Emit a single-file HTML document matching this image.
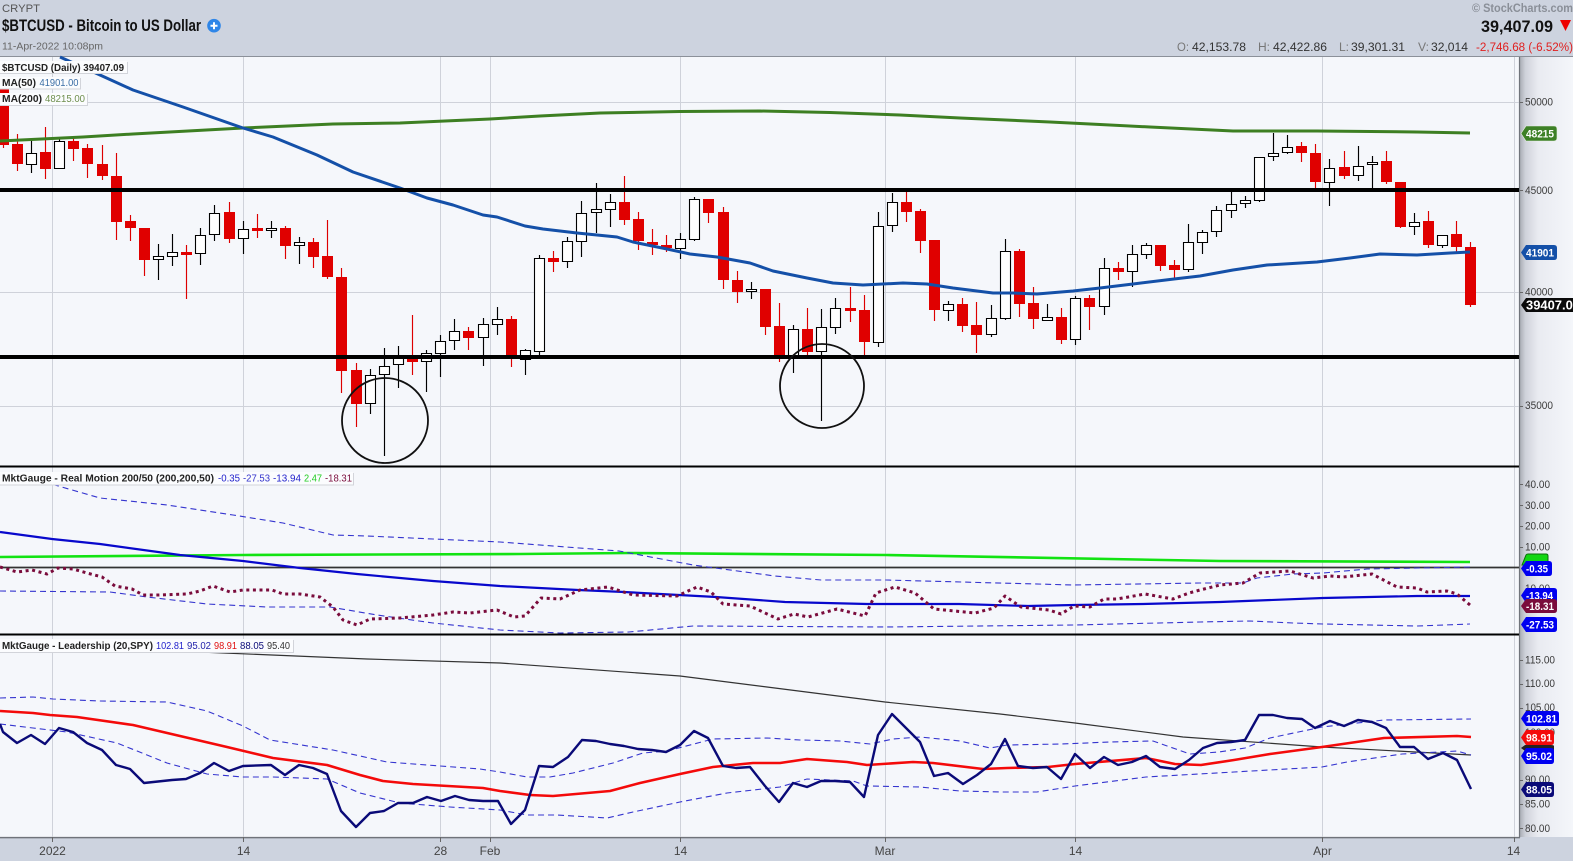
<!DOCTYPE html>
<html>
<head>
<meta charset="utf-8">
<style>
html,body{margin:0;padding:0;background:#cdd3df;overflow:hidden}
svg{display:block}
text{font-family:"Liberation Sans",sans-serif}
.ax{font-size:11px;fill:#3a3a3a}
.xl{font-size:12px;fill:#444;text-anchor:middle}
.lb{font-size:10px;fill:#222;font-weight:bold}
.tg{font-size:11px;fill:#fff;font-weight:bold}
.hd{font-size:11.5px;fill:#333}
.hg{font-size:11.5px;fill:#777}
</style>
</head>
<body>
<svg width="1573" height="861" viewBox="0 0 1573 861" xmlns="http://www.w3.org/2000/svg">
<defs>
<linearGradient id="gut" x1="0" x2="1" y1="0" y2="0">
<stop offset="0" stop-color="#a3a7af"/>
<stop offset="0.12" stop-color="#cfd2da"/>
<stop offset="0.35" stop-color="#e9ebf1"/>
<stop offset="1" stop-color="#f4f6fa"/>
</linearGradient>
</defs>
<rect width="1573" height="861" fill="#cdd3df"/>
<rect x="0" y="57" width="1519" height="780" fill="#f5f7fb"/>
<rect x="1519" y="57" width="54" height="780" fill="url(#gut)"/>
<path d="M0 56.5H1573" stroke="#8b9099" stroke-width="1"/>
<path d="M0 837.5H1519" stroke="#6f737a" stroke-width="1.2"/>
<path d="M0 838.5H1520" stroke="#aeb3bd" stroke-width="1"/>
<path d="M1519.5 57V838" stroke="#70747b" stroke-width="1.2"/>

<!-- grid -->
<g stroke="#cfd2da" stroke-width="1" fill="none">
<path d="M52.5 57V837M243.5 57V837M440.5 57V837M490.5 57V837M680.5 57V837M885.5 57V837M1075.5 57V837M1322.5 57V837M1514.5 57V837"/>
<path d="M0 102.5H1519M0 292.5H1519M0 406.5H1519"/>
</g>
<g stroke="#666" stroke-width="1">
<path d="M52.5 837V842M243.5 837V842M440.5 837V842M490.5 837V842M680.5 837V842M885.5 837V842M1075.5 837V842M1322.5 837V842M1514.5 837V842"/>
<path d="M1520 102.5h3M1520 190.5h3M1520 292.5h3M1520 406.5h3M1520 484.5h3M1520 505.5h3M1520 526.5h3M1520 547.5h3M1520 660.5h3M1520 684.5h3M1520 708.5h3M1520 780.5h3M1520 804.5h3M1520 828.5h3"/>
</g>

<!-- wicks -->
<path fill="none" stroke="#000" stroke-width="1.15" d="M31.5 138V173M59.5 137V168M158.5 244V280M172.5 234V266M200.5 228V265M214.5 205V241M243.5 221V254M271.5 221V238M299.5 237V264M370.5 369V414M384.5 348V456M398.5 346V388M426.5 350V392M440.5 335V377M454.5 319V350M483.5 318V366M497.5 307V335M525.5 349V375M539.5 255V357M567.5 237V268M581.5 201V257M596.5 183V233M610.5 194V227M680.5 233V259M694.5 197V241M751.5 282V299M793.5 325V373M821.5 309V421M835.5 298V334M878.5 212V347M892.5 193V232M948.5 301V321M991.5 305V337M1005.5 239V320M1047.5 304V320M1075.5 296V345M1104.5 258V315M1132.5 245V287M1146.5 243V259M1188.5 224V272M1202.5 230V254M1216.5 206V237M1231.5 191V218M1245.5 196V208M1259.5 157V202M1273.5 133V161M1287.5 135V154M1329.5 159V206M1358.5 146V181M1372.5 156V188M1414.5 213V235M1442.5 235V248"/>
<path fill="none" stroke="#dd0000" stroke-width="1.15" d="M3.5 85V148M17.5 134V171M45.5 127V179M73.5 138V161M87.5 144V178M102.5 145V180M116.5 153V240M130.5 215V241M144.5 228V276M186.5 245V299M229.5 202V243M257.5 214V238M285.5 226V259M313.5 238V268M327.5 220V279M341.5 268V393M356.5 363V427M412.5 315V375M468.5 327V350M511.5 316V367M553.5 251V272M624.5 176V225M638.5 212V250M652.5 229V255M666.5 235V252M708.5 199V223M723.5 207V289M737.5 271V303M765.5 289V335M779.5 303V362M807.5 308V357M850.5 287V322M864.5 295V357M906.5 192V222M920.5 209V253M934.5 240V321M962.5 298V332M976.5 302V353M1019.5 249V317M1033.5 287V329M1061.5 308V344M1089.5 295V330M1118.5 262V280M1160.5 245V271M1174.5 260V279M1301.5 142V162M1315.5 144V188M1344.5 151V179M1386.5 151V184M1400.5 182V228M1428.5 211V248M1456.5 221V252M1470.5 242V307"/>
<!-- red bodies -->
<path fill="#e00000" d="M-2 85h11V145h-11zM12 144h11V164h-11zM40 152h11V169h-11zM68 141h11V149h-11zM82 148h11V164h-11zM97 164h11V176h-11zM111 176h11V222h-11zM125 221h11V228h-11zM139 228h11V260h-11zM181 252h11V255h-11zM224 212h11V239h-11zM252 228h11V231h-11zM280 228h11V246h-11zM308 242h11V257h-11zM322 256h11V277h-11zM336 277h11V371h-11zM351 370h11V404h-11zM407 357h11V362h-11zM463 331h11V338h-11zM506 319h11V359h-11zM548 258h11V262h-11zM619 202h11V220h-11zM633 219h11V241h-11zM647 242h11V245h-11zM661 245h11V248h-11zM703 199h11V213h-11zM718 212h11V280h-11zM732 280h11V292h-11zM760 289h11V327h-11zM774 326h11V357h-11zM802 329h11V352h-11zM845 308h11V311h-11zM859 310h11V342h-11zM901 202h11V212h-11zM915 211h11V241h-11zM929 240h11V310h-11zM957 304h11V326h-11zM971 325h11V335h-11zM1014 251h11V304h-11zM1028 303h11V319h-11zM1056 317h11V340h-11zM1084 298h11V307h-11zM1113 268h11V272h-11zM1155 245h11V266h-11zM1169 265h11V270h-11zM1296 146h11V153h-11zM1310 153h11V182h-11zM1339 167h11V176h-11zM1381 161h11V182h-11zM1395 182h11V227h-11zM1423 221h11V245h-11zM1451 234h11V247h-11zM1465 247h11V305h-11z"/>
<!-- white bodies -->
<path fill="#fff" stroke="#000" stroke-width="1.1" d="M26.5 153.5h10V164.5h-10zM54.5 141.5h10V168.5h-10zM153.5 256.5h10V259.5h-10zM167.5 252.5h10V256.5h-10zM195.5 235.5h10V253.5h-10zM209.5 213.5h10V234.5h-10zM238.5 229.5h10V238.5h-10zM266.5 228.5h10V230.5h-10zM294.5 242.5h10V245.5h-10zM365.5 375.5h10V403.5h-10zM379.5 366.5h10V374.5h-10zM393.5 358.5h10V364.5h-10zM421.5 353.5h10V361.5h-10zM435.5 341.5h10V353.5h-10zM449.5 331.5h10V340.5h-10zM478.5 324.5h10V337.5h-10zM492.5 319.5h10V324.5h-10zM520.5 350.5h10V359.5h-10zM534.5 258.5h10V351.5h-10zM562.5 241.5h10V261.5h-10zM576.5 213.5h10V241.5h-10zM591.5 209.5h10V212.5h-10zM605.5 202.5h10V209.5h-10zM675.5 239.5h10V248.5h-10zM689.5 199.5h10V239.5h-10zM746.5 289.5h10V291.5h-10zM788.5 329.5h10V357.5h-10zM816.5 327.5h10V351.5h-10zM830.5 308.5h10V327.5h-10zM873.5 226.5h10V342.5h-10zM887.5 202.5h10V225.5h-10zM943.5 304.5h10V310.5h-10zM986.5 318.5h10V334.5h-10zM1000.5 251.5h10V318.5h-10zM1042.5 317.5h10V320.5h-10zM1070.5 298.5h10V339.5h-10zM1099.5 268.5h10V306.5h-10zM1127.5 254.5h10V271.5h-10zM1141.5 245.5h10V254.5h-10zM1183.5 242.5h10V269.5h-10zM1197.5 232.5h10V242.5h-10zM1211.5 210.5h10V231.5h-10zM1226.5 204.5h10V210.5h-10zM1240.5 200.5h10V203.5h-10zM1254.5 157.5h10V200.5h-10zM1268.5 153.5h10V156.5h-10zM1282.5 147.5h10V152.5h-10zM1324.5 168.5h10V182.5h-10zM1353.5 166.5h10V175.5h-10zM1367.5 162.5h10V164.5h-10zM1409.5 222.5h10V226.5h-10zM1437.5 235.5h10V245.5h-10z"/>

<!-- MA200 -->
<polyline fill="none" stroke="#3d7f22" stroke-width="3" stroke-linejoin="round" points="0,141 83,137 133,134 243,128 333,124 400,123 490,119 540,116 600,113 680,111.5 760,111 830,112.5 900,115 960,118 1050,122 1100,124.5 1150,127 1233,131 1317,131 1417,132 1470,133"/>
<!-- MA50 -->
<polyline fill="none" stroke="#1450a8" stroke-width="3" stroke-linejoin="round" points="60,57 100,75 133,90 183,107 243,128 273,137 317,155 353,172 400,188 427,198 453,205 483,215 497,217 525,226 543,229 577,233 617,237 633,242 667,249 690,254 717,257 750,263 773,271 807,278 833,283 863,285 903,283 927,284 953,288 993,293 1013,293 1037,294 1073,291 1100,288 1133,284 1174,279 1200,276 1233,270 1267,265 1317,262 1350,258 1380,254 1417,255 1450,253 1470,252"/>

<!-- thick lines -->
<path d="M0 190H1519M0 357H1519" stroke="#000" stroke-width="4"/>
<!-- circles -->
<ellipse cx="385" cy="420.5" rx="43" ry="42.5" fill="none" stroke="#111" stroke-width="1.8"/>
<ellipse cx="822" cy="386" rx="42" ry="42" fill="none" stroke="#111" stroke-width="1.8"/>

<!-- separators -->
<path d="M0 466.5H1519M0 634.5H1519" stroke="#000" stroke-width="2"/>

<!-- Real motion -->
<polyline fill="none" stroke="#12e312" stroke-width="2.6" points="0,557 243,555 520,554 629,553 886,555 1220,561 1470,562"/>
<path d="M0 567.5H1519" stroke="#333" stroke-width="1.8"/>
<polyline fill="none" stroke="#3535cf" stroke-width="1.1" stroke-dasharray="6 4" points="53,484.5 100,498 167,505 233,515 283,523 333,535 367,536 433,539 500,542 619,551 693,565 775,576 821,580 886,580 1074,585 1200,583 1243,583 1257,578 1293,574 1323,573 1367,569 1470,567"/>
<polyline fill="none" stroke="#3535cf" stroke-width="1.1" stroke-dasharray="6 4" points="0,591 110,592 147,597 207,604 267,607 330,607 377,615 433,623 500,630 560,633 629,632 693,626 886,627 1074,625 1200,622 1250,621 1293,623 1323,624 1417,626 1470,624"/>
<polyline fill="none" stroke="#0808cc" stroke-width="2.2" points="0,532 52,539 100,544 180,555 243,561 300,568 357,574 433,581 500,586 578,590 624,592 716,597 785,602 867,604 959,604 1028,606 1074,605 1143,604 1220,602 1323,598 1417,596 1470,596"/>
<polyline fill="none" stroke="#7a0c3c" stroke-width="3" stroke-dasharray="3 3.6" stroke-linejoin="round" points="0,567 17,572 32,570 47,574 58,568 73,569 87,573 102,577 115,586 132,589 143,595 158,595 187,594 200,591 213,586 230,592 243,590 272,590 283,594 300,594 320,597 333,607 343,620 357,625 370,619 400,618 433,615 453,612 470,613 497,610 514,617 525,616 541,598 560,599 580,590 608,587 633,595 677,596 697,587 711,592 723,604 750,606 778,619 794,614 808,617 837,609 865,616 876,593 895,587 915,593 934,609 975,613 994,608 1005,596 1021,607 1049,610 1061,614 1074,606 1090,607 1104,599 1117,599 1145,594 1173,599 1189,593 1200,590 1220,585 1243,583 1260,573 1290,571 1313,578 1330,576 1343,577 1372,574 1397,587 1417,588 1427,592 1447,591 1457,594 1470,605"/>

<!-- Leadership -->
<polyline fill="none" stroke="#333" stroke-width="1.2" points="200,652 367,659 500,663 680,676 767,687 885,702 1000,714 1075,723 1183,737 1322,747 1471,755"/>
<polyline fill="none" stroke="#3535cf" stroke-width="1.1" stroke-dasharray="6 4" points="0,698 33,697 53,699 100,701 167,702 207,711 243,726 270,740 333,750 387,762 440,766 480,769 500,772 527,777 550,777 573,773 613,763 643,753 667,751 713,739 767,738 800,740 840,741 870,744 893,739 920,737 960,741 990,748 1007,745 1062,744 1110,742 1153,741 1190,754 1219,752 1245,748 1270,738 1322,727 1384,720 1471,719"/>
<polyline fill="none" stroke="#3535cf" stroke-width="1.1" stroke-dasharray="6 4" points="0,724 33,728 67,732 117,743 167,763 207,774 243,777 273,777 327,779 360,793 400,803 450,807 500,810 527,815 557,815 607,818 633,812 680,802 727,793 780,787 807,779 853,781 867,786 920,787 960,791 1000,792 1037,792 1075,786 1146,777 1234,772 1322,767 1347,762 1402,754 1457,751 1471,755"/>
<polyline fill="none" stroke="#f40a0a" stroke-width="2.6" stroke-linejoin="round" points="0,711 33,713 50,715 77,717 133,725 227,747 273,758 327,765 360,775 383,781 413,784 483,788 500,791 530,795 553,796 610,791 640,783 680,774 713,767 753,763 780,763 807,759 847,762 867,765 913,762 933,763 983,769 1007,768 1048,767 1075,764 1146,758 1175,764 1201,765 1234,760 1270,754 1322,747 1384,738 1457,736 1471,737"/>
<polyline fill="none" stroke="#0a0a78" stroke-width="2.4" stroke-linejoin="round" points="0,724 3,732 17,743 31,735 45,744 59,728 73,732 87,743 102,750 116,765 130,769 144,783 172,780 186,779 200,773 214,763 229,771 243,766 271,765 285,775 299,765 313,768 327,774 341,811 356,827 370,813 384,811 398,803 413,803 427,797 441,801 455,796 469,800 483,801 498,801 511,824 525,810 539,766 553,767 568,757 582,740 596,741 610,744 624,746 638,749 652,750 666,752 680,745 694,731 708,738 723,766 736,768 750,767 765,786 779,802 793,783 807,787 821,781 835,781 850,782 864,797 878,735 892,714 906,728 920,742 934,776 948,773 963,784 977,775 991,764 1005,739 1018,766 1033,768 1047,767 1061,779 1075,754 1090,768 1104,757 1118,765 1132,762 1146,756 1160,767 1175,769 1189,760 1203,748 1217,743 1231,742 1245,740 1259,715 1273,715 1287,718 1302,719 1315,728 1330,721 1344,726 1358,720 1372,722 1386,728 1400,747 1414,747 1428,759 1443,753 1457,760 1471,789"/>

<!-- legend boxes -->
<g fill="#d2d4da">
<rect x="0" y="62" width="128" height="12"/><rect x="0" y="78" width="81" height="11.5"/><rect x="0" y="94" width="88" height="12"/>
<rect x="0" y="473" width="354" height="12.5"/><rect x="0" y="640" width="294" height="13"/>
</g>
<g fill="#fbfcfe">
<rect x="0" y="61" width="127" height="12"/><rect x="0" y="77" width="80" height="11.5"/><rect x="0" y="93" width="87" height="12"/>
<rect x="0" y="472" width="353" height="12.5"/><rect x="0" y="639" width="293" height="13"/>
</g>
<text class="lb" x="2" y="71" textLength="122" lengthAdjust="spacingAndGlyphs">$BTCUSD (Daily) 39407.09</text>
<text class="lb" x="2" y="86" textLength="34" lengthAdjust="spacingAndGlyphs">MA(50)</text>
<text x="39.5" y="86" font-size="10" fill="#3b6ea5" textLength="39" lengthAdjust="spacingAndGlyphs">41901.00</text>
<text class="lb" x="2" y="102" textLength="40" lengthAdjust="spacingAndGlyphs">MA(200)</text>
<text x="45" y="102" font-size="10" fill="#6f8f4e" textLength="40" lengthAdjust="spacingAndGlyphs">48215.00</text>

<text class="lb" x="2" y="481.5" textLength="212" lengthAdjust="spacingAndGlyphs">MktGauge - Real Motion 200/50 (200,200,50)</text>
<g font-size="10">
<text x="218" y="481.5" fill="#2222cc" textLength="22" lengthAdjust="spacingAndGlyphs">-0.35</text>
<text x="243" y="481.5" fill="#3434cc" textLength="27" lengthAdjust="spacingAndGlyphs">-27.53</text>
<text x="273" y="481.5" fill="#2222cc" textLength="28" lengthAdjust="spacingAndGlyphs">-13.94</text>
<text x="304" y="481.5" fill="#22cc22" textLength="18" lengthAdjust="spacingAndGlyphs">2.47</text>
<text x="325" y="481.5" fill="#7a0c3c" textLength="27" lengthAdjust="spacingAndGlyphs">-18.31</text>
</g>
<text class="lb" x="2" y="649" textLength="151" lengthAdjust="spacingAndGlyphs">MktGauge - Leadership (20,SPY)</text>
<g font-size="10">
<text x="156" y="649" fill="#2222cc" textLength="28" lengthAdjust="spacingAndGlyphs">102.81</text>
<text x="187" y="649" fill="#2222aa" textLength="24" lengthAdjust="spacingAndGlyphs">95.02</text>
<text x="214" y="649" fill="#e01010" textLength="23" lengthAdjust="spacingAndGlyphs">98.91</text>
<text x="240" y="649" fill="#0a0a78" textLength="24" lengthAdjust="spacingAndGlyphs">88.05</text>
<text x="267" y="649" fill="#333" textLength="23" lengthAdjust="spacingAndGlyphs">95.40</text>
</g>

<!-- axis labels -->
<text class="ax" x="1525" y="105.5" textLength="28" lengthAdjust="spacingAndGlyphs">50000</text>
<text class="ax" x="1525" y="194" textLength="28" lengthAdjust="spacingAndGlyphs">45000</text>
<text class="ax" x="1525" y="295.5" textLength="28" lengthAdjust="spacingAndGlyphs">40000</text>
<text class="ax" x="1525" y="409" textLength="28" lengthAdjust="spacingAndGlyphs">35000</text>
<text class="ax" x="1525" y="488" textLength="25" lengthAdjust="spacingAndGlyphs">40.00</text>
<text class="ax" x="1525" y="509" textLength="25" lengthAdjust="spacingAndGlyphs">30.00</text>
<text class="ax" x="1525" y="529.5" textLength="25" lengthAdjust="spacingAndGlyphs">20.00</text>
<text class="ax" x="1525" y="550.5" textLength="25" lengthAdjust="spacingAndGlyphs">10.00</text>
<text class="ax" x="1525" y="592" textLength="25" lengthAdjust="spacingAndGlyphs">10.00</text>
<text class="ax" x="1525" y="663.5" textLength="30" lengthAdjust="spacingAndGlyphs">115.00</text>
<text class="ax" x="1525" y="687" textLength="30" lengthAdjust="spacingAndGlyphs">110.00</text>
<text class="ax" x="1525" y="711" textLength="30" lengthAdjust="spacingAndGlyphs">105.00</text>
<text class="ax" x="1525" y="736" textLength="30" lengthAdjust="spacingAndGlyphs">100.00</text>
<text class="ax" x="1525" y="783" textLength="25" lengthAdjust="spacingAndGlyphs">90.00</text>
<text class="ax" x="1525" y="807.5" textLength="25" lengthAdjust="spacingAndGlyphs">85.00</text>
<text class="ax" x="1525" y="832" textLength="25" lengthAdjust="spacingAndGlyphs">80.00</text>

<!-- tags -->
<path fill="#3d8026" stroke="#e8f0e4" stroke-width=".6" d="M1521 133.5l5-7.5h28q3 0 3 3v9q0 3-3 3h-28z"/>
<text class="tg" x="1526" y="137.500" textLength="28" lengthAdjust="spacingAndGlyphs">48215</text>
<path fill="#1450a8" d="M1521 252.5l5-7.5h28q3 0 3 3v9q0 3-3 3h-28z"/>
<text class="tg" x="1526" y="256.5" textLength="28" lengthAdjust="spacingAndGlyphs">41901</text>
<path fill="#0a0a0a" d="M1521 305l5-7h47v14h-47z"/>
<text class="tg" x="1526" y="309.500" font-size="12.5" style="font-size:12.5px" textLength="54" lengthAdjust="spacingAndGlyphs">39407.09</text>

<path fill="#12d612" stroke="#0a6e0a" stroke-width="1" d="M1522 565l4-10q.5-1 2-1h18q2 0 2 2v9z"/>
<path fill="#0000f0" d="M1521 568.5l5-7.5h23q3 0 3 3v9q0 3-3 3h-23z"/>
<text class="tg" x="1526" y="572.5" textLength="22" lengthAdjust="spacingAndGlyphs">-0.35</text>
<path fill="#0000f0" d="M1521 595.5l5-7.5h28q3 0 3 3v9q0 3-3 3h-28z"/>
<text class="tg" x="1526" y="599.5" textLength="27" lengthAdjust="spacingAndGlyphs">-13.94</text>
<path fill="#7a0c3c" d="M1521 606l5-7h28q3 0 3 3v8q0 3-3 3h-28z"/>
<text class="tg" x="1526" y="610" textLength="28" lengthAdjust="spacingAndGlyphs">-18.31</text>
<path fill="#0000f0" d="M1521 624.5l5-7.5h28q3 0 3 3v9q0 3-3 3h-28z"/>
<text class="tg" x="1526" y="628.5" textLength="28" lengthAdjust="spacingAndGlyphs">-27.53</text>

<path fill="#0000f0" d="M1521 718.5l5-7.5h30q3 0 3 3v9q0 3-3 3h-30z"/>
<text class="tg" x="1526" y="722.5" textLength="31" lengthAdjust="spacingAndGlyphs">102.81</text>
<path fill="#222" d="M1521 748l4-3h26q3 0 3 1v4q0 1-3 1h-26z"/>
<path fill="#f40a0a" d="M1521 737.5l5-7.5h25q3 0 3 3v9q0 3-3 3h-25z"/>
<text class="tg" x="1526" y="741.5" textLength="26" lengthAdjust="spacingAndGlyphs">98.91</text>
<path fill="#0000f0" d="M1521 756l5-8h25q3 0 3 3v10q0 3-3 3h-25z"/>
<text class="tg" x="1526" y="760" textLength="26" lengthAdjust="spacingAndGlyphs">95.02</text>
<path fill="#0a0a78" d="M1521 789.5l5-7.5h25q3 0 3 3v9q0 3-3 3h-25z"/>
<text class="tg" x="1526" y="793.5" textLength="26" lengthAdjust="spacingAndGlyphs">88.05</text>

<!-- x axis -->
<text class="xl" x="52.5" y="855">2022</text>
<text class="xl" x="243.5" y="855">14</text>
<text class="xl" x="440.5" y="855">28</text>
<text class="xl" x="490" y="855">Feb</text>
<text class="xl" x="680.5" y="855">14</text>
<text class="xl" x="885" y="855">Mar</text>
<text class="xl" x="1075.5" y="855">14</text>
<text class="xl" x="1322.5" y="855">Apr</text>
<text class="xl" x="1513.5" y="855">14</text>

<!-- header -->
<text x="2" y="12" font-size="11" fill="#555" textLength="38" lengthAdjust="spacingAndGlyphs">CRYPT</text>
<text x="2" y="31" font-size="16.5" font-weight="bold" fill="#111" textLength="199" lengthAdjust="spacingAndGlyphs">$BTCUSD - Bitcoin to US Dollar</text>
<text x="2" y="49.5" font-size="10.5" fill="#666" textLength="101" lengthAdjust="spacingAndGlyphs">11-Apr-2022 10:08pm</text>
<circle cx="214" cy="25.7" r="6.8" fill="#2f86e8"/>
<path d="M210.5 25.7h7M214 22.2v7" stroke="#fff" stroke-width="2"/>

<text x="1472" y="12" font-size="11.5" font-weight="bold" fill="#8a8f98" textLength="101" lengthAdjust="spacingAndGlyphs">© StockCharts.com</text>
<text x="1481" y="32" font-size="17" font-weight="bold" fill="#111" textLength="72" lengthAdjust="spacingAndGlyphs">39,407.09</text>
<path d="M1560 20h11l-5.500 11z" fill="#ee0000"/>
<text class="hg" x="1177" y="51" textLength="12" lengthAdjust="spacingAndGlyphs">O:</text>
<text class="hd" x="1192" y="51" textLength="54" lengthAdjust="spacingAndGlyphs">42,153.78</text>
<text class="hg" x="1258" y="51" textLength="12" lengthAdjust="spacingAndGlyphs">H:</text>
<text class="hd" x="1273" y="51" textLength="54" lengthAdjust="spacingAndGlyphs">42,422.86</text>
<text class="hg" x="1339" y="51" textLength="10" lengthAdjust="spacingAndGlyphs">L:</text>
<text class="hd" x="1351" y="51" textLength="54" lengthAdjust="spacingAndGlyphs">39,301.31</text>
<text class="hg" x="1418" y="51" textLength="11" lengthAdjust="spacingAndGlyphs">V:</text>
<text class="hd" x="1431" y="51" textLength="37" lengthAdjust="spacingAndGlyphs">32,014</text>
<text x="1476" y="51" font-size="11.5" fill="#e02020" textLength="97" lengthAdjust="spacingAndGlyphs">-2,746.68 (-6.52%)</text>
</svg>
</body>
</html>
